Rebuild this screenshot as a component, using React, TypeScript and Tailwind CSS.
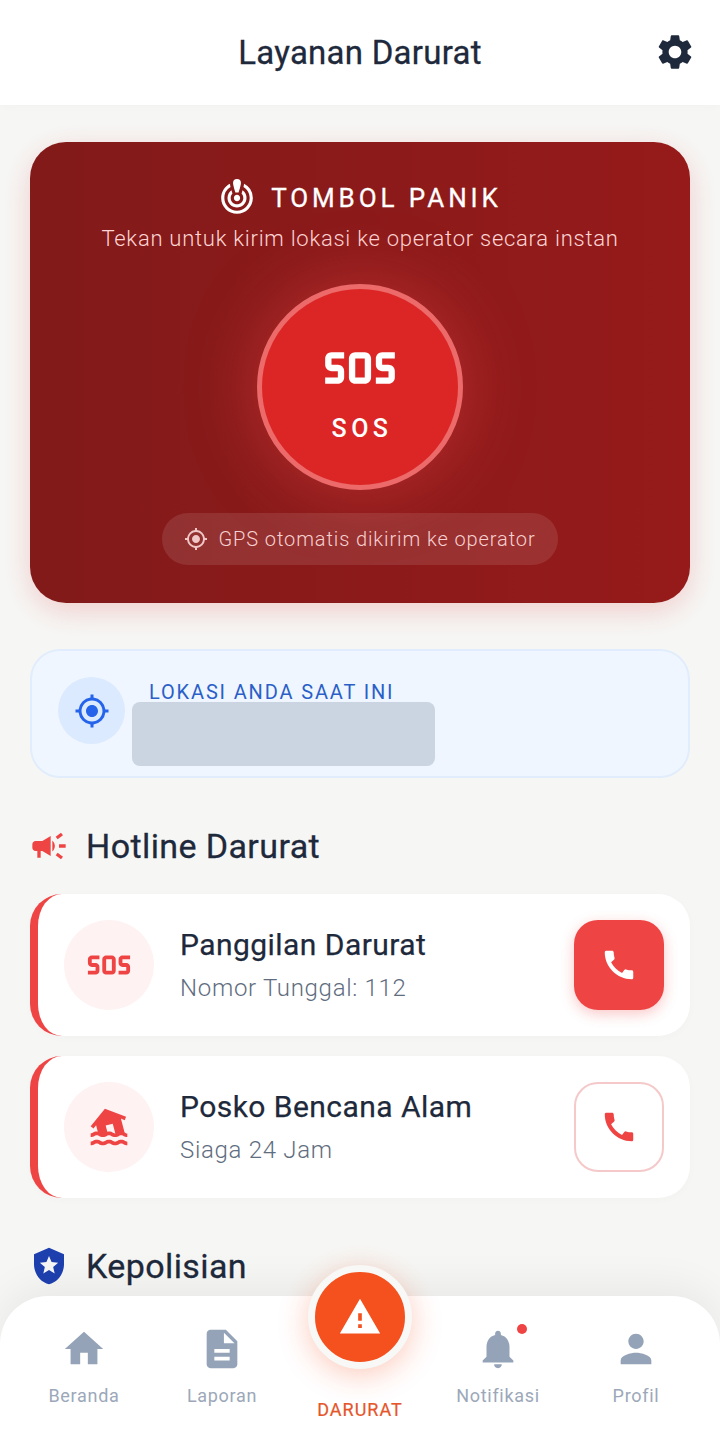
import React from 'react';
import {
  MdSettings, MdCrisisAlert, MdSos, MdGpsFixed, MdCampaign, MdCall, MdFlood, MdLocalPolice,
  MdHome, MdDescription, MdNotifications, MdPerson, MdWarning,
} from 'react-icons/md';

const font = { fontFamily: 'Roboto, sans-serif' };

const HotlineCard = ({ icon, title, sub, filled }: { icon: React.ReactNode; title: string; sub: string; filled?: boolean }) => (
  <div className="h-[142px] bg-white rounded-[32px] border-l-8 border-[#ef4444] pl-[26px] pr-[26px] flex items-center shadow-[0_2px_10px_rgba(0,0,0,0.02)]">
    <div className="w-[90px] h-[90px] rounded-full bg-[#fef2f2] flex items-center justify-center shrink-0 text-[#ef4444]">
      {icon}
    </div>
    <div className="ml-[26px] flex-1">
      <div className="text-[30px] leading-[38px] font-normal [-webkit-text-stroke:0.25px] text-[#1e293b] tracking-[0.45px]">{title}</div>
      <div className="mt-[8px] text-[24px] leading-[33px] font-light text-[#5f6d80] tracking-[0.7px]">{sub}</div>
    </div>
    {filled ? (
      <div className="w-[90px] h-[90px] rounded-[24px] bg-[#ef4444] flex items-center justify-center shadow-[0_4px_14px_rgba(239,68,68,0.3)]">
        <MdCall size={38} className="text-white" />
      </div>
    ) : (
      <div className="w-[90px] h-[90px] rounded-[24px] border-2 border-[#f5c9c9] flex items-center justify-center">
        <MdCall size={38} className="text-[#ef4444]" />
      </div>
    )}
  </div>
);

const NavItem = ({ icon, label, dot }: { icon: React.ReactNode; label: string; dot?: boolean }) => (
  <div className="w-[138px] flex flex-col items-center pt-[29px]">
    <div className="relative h-[48px] flex items-center justify-center text-[#94a3b8]">
      {icon}
      {dot && <span className="absolute top-[-1px] right-[-6px] w-[10px] h-[10px] rounded-full bg-[#ef4444]" />}
    </div>
    <div className="mt-[11px] text-[18px] leading-[24px] font-normal text-[#9ca8b9] tracking-[0.7px]">{label}</div>
  </div>
);

export default function App() {
  return (
    <div style={font} className="relative w-[720px] h-[1437px] overflow-hidden bg-[#f6f7f5]">
      {/* Header */}
      <header className="relative h-[105px] bg-white flex items-center justify-center shadow-[0_2px_8px_rgba(0,0,0,0.02)]">
        <h1 className="text-[33px] font-normal [-webkit-text-stroke:0.3px] text-[#1e293b] tracking-[0.25px]">Layanan Darurat</h1>
        <MdSettings size={42} className="absolute right-[24px] top-[31px] text-[#1e293b]" />
      </header>

      <main className="px-[30px] pt-[37px]">
        {/* Panic card */}
        <section className="h-[461px] rounded-[36px] bg-gradient-to-r from-[#821a1a] to-[#961a1a] flex flex-col items-center pt-[36px] shadow-[0_8px_30px_rgba(220,38,38,0.2)]">
          <div className="flex items-center h-[40px]">
            <MdCrisisAlert size={38} className="text-white" />
            <span className="ml-[15px] text-[26px] font-normal [-webkit-text-stroke:0.3px] text-white tracking-[3.9px]">TOMBOL PANIK</span>
          </div>
          <p className="mt-[6px] text-[22px] leading-[30px] font-light text-[#fcd5d5] tracking-[0.74px]">Tekan untuk kirim lokasi ke operator secara instan</p>
          <div className="mt-[30px] w-[206px] h-[206px] rounded-full bg-[#dc2626] border-[5px] border-[#ec6a6a] flex flex-col items-center justify-center shadow-[0_0_70px_rgba(239,68,68,0.45)]">
            <MdSos size={76} className="text-white mt-[4px]" />
            <span className="mt-[4px] pl-[4px] text-[25px] font-medium text-white tracking-[4.5px]">SOS</span>
          </div>
          <div className="mt-[23px] w-[396px] h-[52px] rounded-full bg-white/10 flex items-center justify-center">
            <MdGpsFixed size={24} className="text-[#f0c6c6]" />
            <span className="ml-[10px] text-[20px] font-light text-[#f5d0d0] tracking-[0.9px]">GPS otomatis dikirim ke operator</span>
          </div>
        </section>

        {/* Current location */}
        <section className="relative mt-[46px] h-[129px] rounded-[30px] bg-[#eff6ff] border-2 border-[#e1edfc] flex items-center pl-[26px] pb-[6px]">
          <div className="w-[67px] h-[67px] rounded-full bg-[#dbeafe] flex items-center justify-center shrink-0">
            <MdGpsFixed size={36} className="text-[#2563eb]" />
          </div>
          <div className="self-start ml-[24px] mt-[28px] text-[20px] leading-[26px] text-[#2b5fc8] tracking-[1.85px]">LOKASI ANDA SAAT INI</div>
          <div className="absolute left-[100px] top-[51px] w-[303px] h-[64px] rounded-[8px] bg-[#cbd5e1]" />
        </section>

        {/* Hotline */}
        <div className="mt-[45px] h-[46px] flex items-center">
          <MdCampaign size={40} className="text-[#ef4444] ml-[-1px]" />
          <h2 className="ml-[17px] text-[34px] font-normal [-webkit-text-stroke:0.3px] text-[#1e293b] tracking-[0.4px]">Hotline Darurat</h2>
        </div>
        <div className="mt-[25px] flex flex-col gap-[20px]">
          <HotlineCard icon={<MdSos size={46} />} title="Panggilan Darurat" sub="Nomor Tunggal: 112" filled />
          <HotlineCard icon={<MdFlood size={44} />} title="Posko Bencana Alam" sub="Siaga 24 Jam" />
        </div>

        {/* Police */}
        <div className="mt-[45px] h-[46px] flex items-center">
          <MdLocalPolice size={40} className="text-[#1e40af] ml-[-1px]" />
          <h2 className="ml-[17px] text-[34px] font-normal [-webkit-text-stroke:0.3px] text-[#1e293b] tracking-[0.4px]">Kepolisian</h2>
        </div>
      </main>

      {/* Bottom navigation */}
      <nav className="absolute left-0 right-0 bottom-0 h-[141px] bg-white rounded-t-[48px] shadow-[0_-10px_40px_rgba(0,0,0,0.06)] flex px-[15px]">
        <NavItem icon={<MdHome size={46} />} label="Beranda" />
        <NavItem icon={<MdDescription size={46} />} label="Laporan" />
        <div className="w-[138px] relative flex justify-center">
          <div className="absolute top-[-31px] w-[104px] h-[104px] rounded-full bg-[#f4511e] border-[7px] border-[#f8f8f6] flex items-center justify-center shadow-[0_6px_30px_rgba(244,81,30,0.3)]">
            <MdWarning size={44} className="text-white" />
          </div>
          <span className="absolute top-[102px] text-[18px] leading-[24px] font-normal [-webkit-text-stroke:0.2px] text-[#e5562a] tracking-[1px]">DARURAT</span>
        </div>
        <NavItem icon={<MdNotifications size={46} />} label="Notifikasi" dot />
        <NavItem icon={<MdPerson size={46} />} label="Profil" />
      </nav>
    </div>
  );
}
